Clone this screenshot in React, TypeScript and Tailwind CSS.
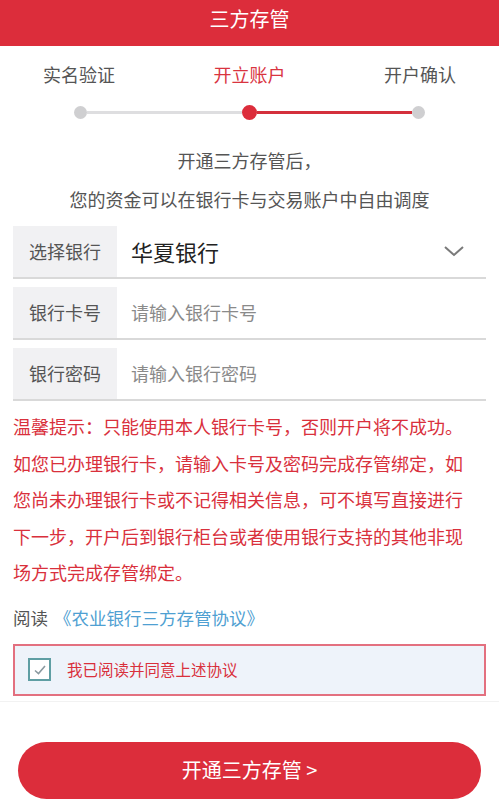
import { useState } from "react";

const FONT = { fontFamily: '"Noto Sans CJK SC", "Noto Sans", sans-serif' };

type FieldRowProps = {
  label: string;
  children: React.ReactNode;
};

function FieldRow({ label, children }: FieldRowProps) {
  return (
    <div className="flex h-[53px] items-stretch border-b-2 border-[#d9d9d9]">
      <div className="flex w-[104px] shrink-0 items-center justify-center bg-[#f1f1f3] text-[18px] text-[#555]">
        {label}
      </div>
      <div className="flex flex-1 items-center pl-[14px] pr-[22px]">{children}</div>
    </div>
  );
}

export default function App() {
  const [agreed, setAgreed] = useState(true);

  return (
    <div className="h-[810px] w-[499px] overflow-hidden bg-white" style={FONT}>
      <header className="flex h-[46px] items-center justify-center bg-[#dc2d3b] pb-[8px] text-[20px] text-white">
        三方存管
      </header>

      <div className="flex justify-between px-[43px] pt-[14px] text-[18px] leading-[28px] text-[#555]">
        <span>实名验证</span>
        <span className="text-[#d9343f]">开立账户</span>
        <span>开户确认</span>
      </div>

      <div className="mx-[74px] mt-[17px] flex items-center">
        <span className="h-[13px] w-[13px] shrink-0 rounded-full bg-[#cfcfd1]" />
        <span className="h-[3px] flex-1 bg-[#dedee0]" />
        <span className="h-[15px] w-[15px] shrink-0 rounded-full bg-[#dc2d3b]" />
        <span className="h-[3px] flex-1 bg-[#d4303c]" />
        <span className="h-[13px] w-[13px] shrink-0 rounded-full bg-[#cfcfd1]" />
      </div>

      <div className="mt-[21px] text-center text-[18px] leading-[39px] text-[#555]">
        <p>开通三方存管后，</p>
        <p>您的资金可以在银行卡与交易账户中自由调度</p>
      </div>

      <div className="mt-[7px] flex flex-col gap-[8px] px-[13px]">
        <FieldRow label="选择银行">
          <span className="flex-1 text-[22px] text-[#222]">华夏银行</span>
          <svg width="20" height="11" viewBox="0 0 20 11" fill="none">
            <path d="M1 1l9 8 9-8" stroke="#7a7a7a" strokeWidth="2" />
          </svg>
        </FieldRow>
        <FieldRow label="银行卡号">
          <input
            type="text"
            placeholder="请输入银行卡号"
            className="w-full bg-transparent text-[18px] text-[#333] outline-none placeholder:text-[#8a8a8a]"
          />
        </FieldRow>
        <FieldRow label="银行密码">
          <input
            type="password"
            placeholder="请输入银行密码"
            className="w-full bg-transparent text-[18px] text-[#333] outline-none placeholder:text-[#8a8a8a]"
          />
        </FieldRow>
      </div>

      <div className="mt-[7px] px-[13px] text-[18px] leading-[36.5px] text-[#d9303c]">
        <p>温馨提示：只能使用本人银行卡号，否则开户将不成功。</p>
        <p>
          如您已办理银行卡，请输入卡号及密码完成存管绑定，如
          <br />
          您尚未办理银行卡或不记得相关信息，可不填写直接进行
          <br />
          下一步，开户后到银行柜台或者使用银行支持的其他非现
          <br />
          场方式完成存管绑定。
        </p>
      </div>

      <div className="mt-[13px] px-[13px] text-[17.5px] leading-[28px]">
        <span className="text-[#555]">阅读</span>
        <span className="ml-[6px] text-[#4fa0d2]">《农业银行三方存管协议》</span>
      </div>

      <label className="mx-[13px] mt-[12px] flex h-[52px] cursor-pointer items-center gap-[16px] border-2 border-[#e3707f] bg-[#eef3fa] pl-[13px]">
        <input
          type="checkbox"
          checked={agreed}
          onChange={(e) => setAgreed(e.target.checked)}
          className="hidden"
        />
        <span className="flex h-[23px] w-[23px] items-center justify-center border-2 border-[#5f9ea3] bg-white">
          {agreed && (
            <svg width="12" height="10" viewBox="0 0 12 10" fill="none">
              <path d="M1 5.5l3.5 3L11 1" stroke="#8a9aa0" strokeWidth="1.6" />
            </svg>
          )}
        </span>
        <span className="text-[15.5px] text-[#d9303c]">我已阅读并同意上述协议</span>
      </label>

      <div className="mt-[5px] border-t border-[#f2f2f2]" />

      <div className="px-[18px] pt-[40px]">
        <button
          type="button"
          className="flex h-[57px] w-full items-center justify-center rounded-full bg-[#dc2d3b] text-[20px] text-white"
        >
          开通三方存管 &gt;
        </button>
      </div>
    </div>
  );
}
